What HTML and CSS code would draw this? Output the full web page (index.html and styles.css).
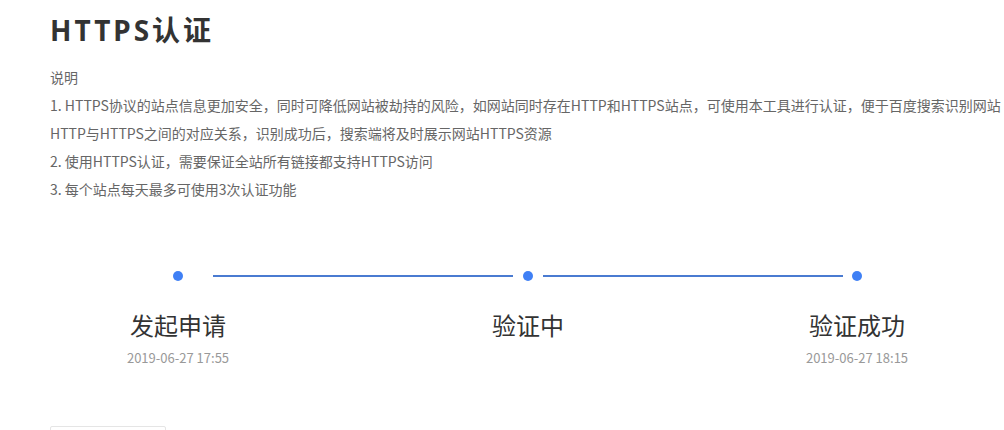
FILE: index.html
```html
<!DOCTYPE html>
<html lang="zh-CN">
<head>
    <meta charset="UTF-8">
    <title>HTTPS认证</title>
    <link rel="stylesheet" href="styles.css">
</head>
<body>

<div class="container">
    <h1>HTTPS认证</h1>

    <div class="desc">
        <p>说明</p>
        <p>1. HTTPS协议的站点信息更加安全，同时可降低网站被劫持的风险，如网站同时存在HTTP和HTTPS站点，可使用本工具进行认证，便于百度搜索识别网站HTTP与HTTPS之间的对应关系，识别成功后，搜索端将及时展示网站HTTPS资源</p>
        <p>2. 使用HTTPS认证，需要保证全站所有链接都支持HTTPS访问</p>
        <p>3. 每个站点每天最多可使用3次认证功能</p>
    </div>

    <div class="steps">
        <span class="dot col-1"></span>
        <span class="line col-2"></span>
        <span class="dot col-3"></span>
        <span class="line col-4"></span>
        <span class="dot col-5"></span>

        <div class="step-name col-1">发起申请</div>
        <div class="step-name col-3">验证中</div>
        <div class="step-name col-5">验证成功</div>

        <div class="step-time col-1">2019-06-27 17:55</div>
        <div class="step-time col-3"></div>
        <div class="step-time col-5">2019-06-27 18:15</div>
    </div>

    <div class="actions">
        <button class="btn">重新认证</button>
    </div>
</div>

</body>
</html>
```

FILE: styles.css
```css
body {
    font-family: "Noto Sans CJK SC", sans-serif;
    background-color: #fff;
    margin: 0;
    padding: 0;
}
.container {
    padding: 0 0 0 50px;
    width: 954px;
}
h1 {
    font-family: "Noto Sans", "Noto Sans CJK SC", sans-serif;
    font-size: 28px;
    font-weight: bold;
    letter-spacing: 3px;
    line-height: 40px;
    color: #333;
    margin: 10px 0 0;
}
.desc {
    margin-top: 13px;
    font-size: 14px;
    line-height: 28px;
    color: #666;
}
.desc p {
    margin: 0;
}
.steps {
    display: grid;
    grid-template-columns: 70px 300px 30px 300px 28px;
    grid-template-rows: 12px auto auto;
    margin: 67px 0 0 93px;
}
.col-1 { grid-column: 1; }
.col-2 { grid-column: 2; }
.col-3 { grid-column: 3; }
.col-4 { grid-column: 4; }
.col-5 { grid-column: 5; }
.dot {
    grid-row: 1;
    justify-self: center;
    align-self: center;
    width: 10px;
    height: 10px;
    border-radius: 50%;
    background-color: #3f80f5;
}
.line {
    grid-row: 1;
    align-self: center;
    height: 2px;
    background-color: #4a7bd1;
}
.step-name {
    grid-row: 2;
    justify-self: center;
    white-space: nowrap;
    margin-top: 27px;
    font-size: 24px;
    line-height: 32px;
    color: #333;
}
.step-time {
    grid-row: 3;
    justify-self: center;
    white-space: nowrap;
    margin-top: 7px;
    font-size: 13px;
    line-height: 20px;
    height: 20px;
    color: #999;
}
.actions {
    margin-top: 58px;
}
.btn {
    width: 116px;
    height: 44px;
    background-color: #fff;
    border: 1px solid #e5e5e5;
    border-radius: 2px;
    color: #333;
    font-family: inherit;
    font-size: 14px;
}
```
